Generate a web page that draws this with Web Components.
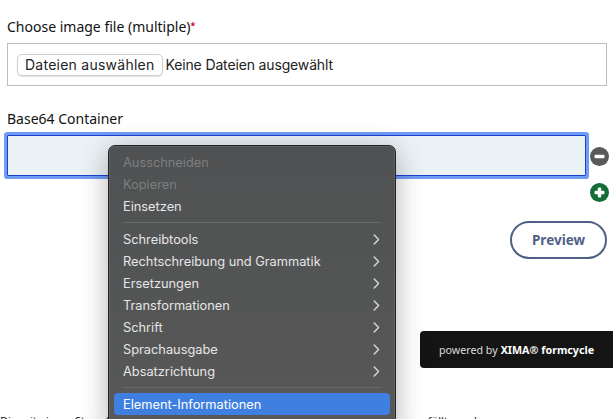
<!DOCTYPE html>
<html lang="de">
<head>
<meta charset="utf-8">
<title>Base64 Container</title>
<style>
  html, body { margin: 0; height: 100%; overflow: hidden; background: #fff; }
</style>
</head>
<body>
<form-page>
  <form-field label="Choose image file (multiple)" required>
    <file-box></file-box>
  </form-field>
  <form-field label="Base64 Container">
    <base64-row></base64-row>
  </form-field>
  <form-actions></form-actions>
  <powered-badge></powered-badge>
  <form-footnote></form-footnote>
  <context-menu></context-menu>
</form-page>

<script>
class FormPage extends HTMLElement {
  constructor() {
    super();
    this.attachShadow({ mode: "open" });
    this.shadowRoot.innerHTML = `
      <style>
        :host {
          display: flex;
          flex-direction: column;
          position: relative;
          height: 419px;
          overflow: hidden;
          padding: 18px 6px 0 7px;
          box-sizing: border-box;
          font-family: "Noto Sans", Arial, sans-serif;
          color: #111;
        }
      </style>
      <slot></slot>
    `;
  }
}

class FormField extends HTMLElement {
  constructor() {
    super();
    this.attachShadow({ mode: "open" });
    const req = this.hasAttribute("required") ? '<span class="req">*</span>' : "";
    this.shadowRoot.innerHTML = `
      <style>
        :host { display: block; flex: none; margin-top: 24px; }
        :host(:first-child) { margin-top: 0; }
        .label {
          font-size: 14px;
          line-height: 18px;
          margin-bottom: 7px;
          white-space: nowrap;
        }
        .req { color: #d0021b; font-size: 9px; line-height: 0; vertical-align: 3px; font-weight: bold; }
      </style>
      <div class="label">${this.getAttribute("label")}${req}</div>
      <slot></slot>
    `;
  }
}

class FileBox extends HTMLElement {
  constructor() {
    super();
    this.attachShadow({ mode: "open" });
    this.shadowRoot.innerHTML = `
      <style>
        :host {
          display: flex;
          align-items: center;
          height: 43px;
          box-sizing: border-box;
          padding: 0 9px;
          border: 1px solid #bdbdbd;
          font-family: Inter, "Liberation Sans", sans-serif;
          font-size: 14px;
          color: #222;
        }
        .btn {
          height: 22px;
          line-height: 20px;
          box-sizing: border-box;
          padding: 0 7px;
          border: 1px solid #cfcfcf;
          border-radius: 5px;
          background: #fff;
          box-shadow: 0 1px 1px rgba(0,0,0,.12);
          margin-right: 3px;
          white-space: nowrap;
          letter-spacing: .25px;
        }
        .none { letter-spacing: -.15px; }
      </style>
      <span class="btn">Dateien auswählen</span>
      <span class="none">Keine Dateien ausgewählt</span>
    `;
  }
}

class Base64Row extends HTMLElement {
  constructor() {
    super();
    this.attachShadow({ mode: "open" });
    this.shadowRoot.innerHTML = `
      <style>
        :host { display: flex; align-items: flex-start; gap: 4px; }
        .input {
          width: 579px;
          height: 41px;
          box-sizing: border-box;
          background: #ebf2f5;
          border: 1px solid #1f3fd1;
          box-shadow: 0 0 0 3px #6f9cf5;
          border-radius: 1px;
          flex: none;
        }
        .btns { display: flex; flex-direction: column; gap: 17px; padding-top: 12px; }
        svg { display: block; width: 19px; height: 19px; }
      </style>
      <div class="input"></div>
      <div class="btns">
        <svg viewBox="0 0 19 19"><circle cx="9.5" cy="9.5" r="9.5" fill="#5a5a5a"/><rect x="4.5" y="7.8" width="10" height="3.4" rx="1" fill="#fff"/></svg>
        <svg viewBox="0 0 19 19"><circle cx="9.5" cy="9.5" r="9.5" fill="#146c36"/><rect x="4.5" y="7.8" width="10" height="3.4" rx="1" fill="#fff"/><rect x="7.8" y="4.5" width="3.4" height="10" rx="1" fill="#fff"/></svg>
      </div>
    `;
  }
}

class FormActions extends HTMLElement {
  constructor() {
    super();
    this.attachShadow({ mode: "open" });
    this.shadowRoot.innerHTML = `
      <style>
        :host { display: flex; flex: none; justify-content: flex-end; margin-top: 19px; }
        .preview {
          width: 97px;
          height: 38px;
          box-sizing: border-box;
          border: 2px solid #4f5f86;
          border-radius: 19px;
          color: #4f5f86;
          font-weight: 700;
          font-size: 13.5px;
          display: flex;
          align-items: center;
          justify-content: center;
        }
      </style>
      <div class="preview">Preview</div>
    `;
  }
}

class PoweredBadge extends HTMLElement {
  constructor() {
    super();
    this.attachShadow({ mode: "open" });
    this.shadowRoot.innerHTML = `
      <style>
        :host {
          display: flex;
          flex: none;
          align-items: center;
          justify-content: center;
          align-self: flex-end;
          width: 193px;
          height: 37px;
          margin: 72px -6px 0 0;
          background: #141414;
          border-radius: 4px 0 0 4px;
          color: #ddd;
          font-size: 10.7px;
          white-space: nowrap;
        }
        b { color: #fff; margin: 0 3px; }
        b + b { margin: 0; }
      </style>
      <span>powered by<b>XIMA®</b><b>formcycle</b></span>
    `;
  }
}

class FormFootnote extends HTMLElement {
  constructor() {
    super();
    this.attachShadow({ mode: "open" });
    this.shadowRoot.innerHTML = `
      <style>
        :host { display: block; flex: none; margin: 44px -200px 0 -7px; font-size: 11px; line-height: 18px; white-space: nowrap; color: #222; }
        span { color: #d0021b; }
      </style>
      Die mit einem Stern (<span>*</span>) gekennzeichneten Eingabefelder müssen vollständig ausgefüllt werden.
    `;
  }
}

class ContextMenu extends HTMLElement {
  constructor() {
    super();
    this.attachShadow({ mode: "open" });
    const item = (t, sub, cls = "") => `<div class="item ${cls}"><span>${t}</span>${sub ? '<svg viewBox="0 0 7 11"><path d="M1.2 1 L5.6 5.5 L1.2 10" fill="none" stroke="currentColor" stroke-width="1.4" stroke-linecap="round" stroke-linejoin="round"/></svg>' : ""}</div>`;
    this.shadowRoot.innerHTML = `
      <style>
        :host {
          display: block;
          position: absolute;
          left: 108px;
          top: 145px;
          width: 288px;
          height: 290px;
          box-sizing: border-box;
          padding: 5px;
          background: linear-gradient(#4f5152, #585858);
          border: 1px solid #222;
          border-radius: 7px;
          box-shadow: 0 0 0 .5px rgba(255,255,255,.2) inset, 0 6px 28px rgba(0,0,0,.3);
          font-family: Inter, "Liberation Sans", sans-serif;
          font-size: 12.8px;
          color: #e6e6e6;
        }
        .item {
          display: flex;
          align-items: center;
          justify-content: space-between;
          height: 22px;
          padding: 0 10px 0 9px;
          white-space: nowrap;
        }
        .item svg { width: 7px; height: 11px; color: #d8d8d8; }
        .off { color: #7c7e7f; }
        .sel { background: #3f7fe0; border-radius: 4px; color: #fff; }
        hr { border: 0; border-top: 1px solid #67696a; margin: 5px 9px; }
      </style>
      ${item("Ausschneiden", false, "off")}
      ${item("Kopieren", false, "off")}
      ${item("Einsetzen")}
      <hr>
      ${item("Schreibtools", true)}
      ${item("Rechtschreibung und Grammatik", true)}
      ${item("Ersetzungen", true)}
      ${item("Transformationen", true)}
      ${item("Schrift", true)}
      ${item("Sprachausgabe", true)}
      ${item("Absatzrichtung", true)}
      <hr>
      ${item("Element-Informationen", false, "sel")}
    `;
  }
}

customElements.define("form-page", FormPage);
customElements.define("form-field", FormField);
customElements.define("file-box", FileBox);
customElements.define("base64-row", Base64Row);
customElements.define("form-actions", FormActions);
customElements.define("powered-badge", PoweredBadge);
customElements.define("form-footnote", FormFootnote);
customElements.define("context-menu", ContextMenu);
</script>
</body>
</html>
